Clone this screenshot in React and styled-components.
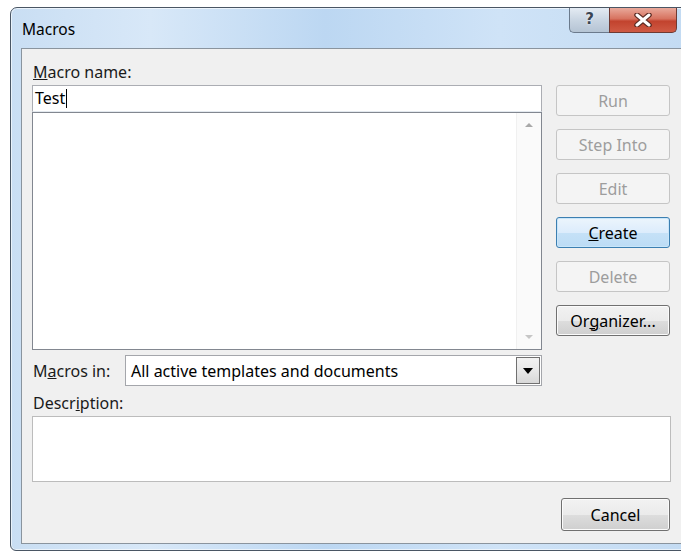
import styled, { createGlobalStyle } from 'styled-components';

const GlobalStyle = createGlobalStyle`
	html, body {
		margin: 0;
		padding: 0;
		background: #ffffff;
		overflow: hidden;
	}
	body {
		font-family: 'Noto Sans', 'Open Sans', sans-serif;
		font-size: 16px;
		color: #000;
	}
`;

const buttons = [
	{ label: 'Run', kind: 'disabled' },
	{ label: 'Step Into', kind: 'disabled' },
	{ label: 'Edit', kind: 'disabled' },
	{ label: 'Create', key: 'C', rest: 'reate', kind: 'default' },
	{ label: 'Delete', kind: 'disabled' },
	{ label: 'Organizer...', pre: 'Or', key: 'g', rest: 'anizer...', kind: 'normal' },
];

function ButtonLabel({ item }) {
	if (!item.key) return item.label;
	return (
		<>
			{item.pre}
			<u>{item.key}</u>
			{item.rest}
		</>
	);
}

function App() {
	return (
		<Page>
			<GlobalStyle />
			<Window>
				<TitleBar>
					<Title>Macros</Title>
					<Caption>
						<HelpButton>?</HelpButton>
						<CloseButton>
							<svg width="18" height="14" viewBox="0 0 18 14">
								<path
									d="M3 2 L15 12 M15 2 L3 12"
									stroke="#5a2a22"
									strokeWidth="5.5"
									strokeLinecap="round"
								/>
								<path
									d="M3 2 L15 12 M15 2 L3 12"
									stroke="#ffffff"
									strokeWidth="3"
									strokeLinecap="round"
								/>
							</svg>
						</CloseButton>
					</Caption>
				</TitleBar>
				<Client>
					<MainRow>
						<LeftColumn>
							<Label>
								<u>M</u>acro name:
							</Label>
							<NameInput>
								Test<Caret />
							</NameInput>
							<ListBox>
								<ScrollBar>
									<Arrow $up />
									<Arrow />
								</ScrollBar>
							</ListBox>
							<ComboRow>
								<ComboLabel>
									M<u>a</u>cros in:
								</ComboLabel>
								<Combo>
									<ComboText>All active templates and documents</ComboText>
									<DropButton>
										<svg width="10" height="6" viewBox="0 0 10 6">
											<path d="M0 0 L10 0 L5 6 Z" fill="#000" />
										</svg>
									</DropButton>
								</Combo>
							</ComboRow>
						</LeftColumn>
						<ButtonColumn>
							{buttons.map((item) => (
								<DialogButton key={item.label} $kind={item.kind}>
									<ButtonLabel item={item} />
								</DialogButton>
							))}
						</ButtonColumn>
					</MainRow>
					<DescLabel>
						Descr<u>i</u>ption:
					</DescLabel>
					<DescBox />
					<Footer>
						<CancelButton $kind="normal">Cancel</CancelButton>
					</Footer>
				</Client>
			</Window>
		</Page>
	);
}

export default App;

const Page = styled.div`
	width: 681px;
	height: 553px;
	padding: 7px 0 0 10px;
	box-sizing: border-box;
	overflow: hidden;
`;

const Window = styled.div`
	width: 700px;
	height: 544px;
	box-sizing: border-box;
	border: 1px solid #4a5664;
	border-radius: 7px 7px 6px 6px;
	background: linear-gradient(90deg, #c9def3 0%, #d8e8f8 20%, #bcd7f2 45%, #cfe3f7 70%, #c2daf2 100%);
	padding: 0 8px 6px 10px;
	display: flex;
	flex-direction: column;
	box-shadow: inset 0 0 0 1px rgba(255, 255, 255, 0.6);
`;

const TitleBar = styled.div`
	height: 40px;
	display: flex;
	align-items: flex-start;
	justify-content: space-between;
	flex-shrink: 0;
`;

const Title = styled.div`
	font-size: 15.5px;
	margin-top: 10px;
	padding-left: 1px;
	color: #000;
`;

const Caption = styled.div`
	display: flex;
	margin-right: 24px;
`;

const HelpButton = styled.div`
	width: 40px;
	height: 25px;
	box-sizing: border-box;
	border: 1px solid #6b7a8c;
	border-top: none;
	border-right: none;
	border-radius: 0 0 0 5px;
	background: linear-gradient(180deg, #e4ebf3 0%, #c9d5e2 50%, #b5c4d4 100%);
	color: #3a4654;
	font-family: 'DejaVu Sans', sans-serif;
	font-weight: bold;
	font-size: 15px;
	text-align: center;
	line-height: 23px;
	text-shadow: 0 0 2px #fff;
`;

const CloseButton = styled.div`
	width: 68px;
	height: 25px;
	box-sizing: border-box;
	border: 1px solid #6e3a33;
	border-top: none;
	border-radius: 0 0 5px 0;
	background: linear-gradient(180deg, #e9a99b 0%, #d7725f 45%, #c2432e 55%, #cf5a44 100%);
	display: flex;
	align-items: center;
	justify-content: center;
`;

const Client = styled.div`
	flex: 1;
	background: #f0f0f0;
	border: 1px solid #8a949e;
	padding: 12px 10px 0 10px;
	display: flex;
	flex-direction: column;
`;

const MainRow = styled.div`
	display: flex;
	gap: 14px;
`;

const LeftColumn = styled.div`
	width: 510px;
	display: flex;
	flex-direction: column;
`;

const Label = styled.div`
	height: 24px;
	line-height: 22px;
	padding-left: 1px;
	color: #1a1a1a;
`;

const NameInput = styled.div`
	height: 27px;
	box-sizing: border-box;
	background: #fff;
	border: 1px solid #abadb3;
	border-bottom-color: #e3e9ef;
	padding: 2px 2px;
	line-height: 21px;
	display: flex;
	align-items: center;
`;

const Caret = styled.span`
	display: inline-block;
	width: 1px;
	height: 19px;
	background: #000;
	margin-left: 1px;
`;

const ListBox = styled.div`
	height: 238px;
	box-sizing: border-box;
	background: #fff;
	border: 1px solid #828790;
	display: flex;
	justify-content: flex-end;
`;

const ScrollBar = styled.div`
	width: 24px;
	background: #fafafa;
	border-left: 1px solid #f0f0f0;
	display: flex;
	flex-direction: column;
	justify-content: space-between;
	align-items: center;
	padding: 10px 0 10px;
`;

const Arrow = styled.div`
	width: 0;
	height: 0;
	border-left: 4px solid transparent;
	border-right: 4px solid transparent;
	${({ $up }) =>
		$up ? 'border-bottom: 4px solid #a8a8a8;' : 'border-top: 4px solid #c6c6c6;'}
`;

const ComboRow = styled.div`
	display: flex;
	align-items: center;
	margin-top: 5px;
	height: 31px;
`;

const ComboLabel = styled.div`
	width: 92px;
	padding-left: 1px;
	color: #1a1a1a;
`;

const Combo = styled.div`
	flex: 1;
	height: 31px;
	box-sizing: border-box;
	background: #fff;
	border: 1px solid #a4a6ab;
	display: flex;
	align-items: stretch;
`;

const ComboText = styled.div`
	flex: 1;
	padding-left: 5px;
	display: flex;
	align-items: center;
`;

const DropButton = styled.div`
	width: 24px;
	margin: 1px;
	box-sizing: border-box;
	border: 1px solid #707070;
	background: linear-gradient(180deg, #f2f2f2 0%, #e8e8e8 50%, #d8d8d8 100%);
	display: flex;
	align-items: center;
	justify-content: center;
`;

const ButtonColumn = styled.div`
	width: 114px;
	padding-top: 24px;
	display: flex;
	flex-direction: column;
	gap: 13px;
`;

const kinds = {
	disabled: `
		border-color: #c5c5c5;
		background: #f4f4f4;
		color: #9d9d9d;
	`,
	default: `
		border-color: #3c7fb1;
		background: linear-gradient(180deg, #ecf5fc 0%, #dcecfc 50%, #c5e1f7 52%, #bcdcf5 100%);
		color: #000;
		box-shadow: inset 0 0 0 1px #c9e6fa;
	`,
	normal: `
		border-color: #707070;
		background: linear-gradient(180deg, #f2f2f2 0%, #ebebeb 50%, #dddddd 52%, #cfcfcf 100%);
		color: #000;
		box-shadow: inset 0 0 0 1px #fbfbfb;
	`,
};

const DialogButton = styled.div`
	height: 31px;
	box-sizing: border-box;
	border: 1px solid;
	border-radius: 3px;
	display: flex;
	align-items: center;
	justify-content: center;
	${({ $kind }) => kinds[$kind]}
`;

const DescLabel = styled.div`
	margin-top: 6px;
	height: 24px;
	line-height: 22px;
	padding-left: 1px;
	color: #1a1a1a;
`;

const DescBox = styled.div`
	width: 639px;
	height: 66px;
	box-sizing: border-box;
	background: #fff;
	border: 1px solid #bcbcbc;
`;

const Footer = styled.div`
	width: 638px;
	display: flex;
	justify-content: flex-end;
	margin-top: 16px;
`;

const CancelButton = styled(DialogButton)`
	width: 109px;
	height: 33px;
`;
